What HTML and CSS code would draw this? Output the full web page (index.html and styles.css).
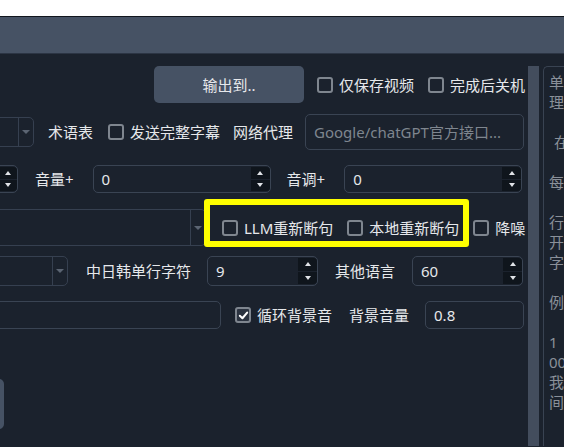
FILE: index.html
```html
<!DOCTYPE html>
<html lang="zh">
<head>
<meta charset="utf-8">
<title>视频翻译</title>
<link rel="stylesheet" href="styles.css">
</head>
<body>
<div class="topstrip"></div>
<div class="titlebar"></div>
<div class="main">
  <div class="form">
    <div class="row r1">
      <button class="btn out">输出到..</button>
      <label class="chk c-a"><span class="box"></span>仅保存视频</label>
      <label class="chk c-b"><span class="box"></span>完成后关机</label>
    </div>
    <div class="row r2">
      <div class="combo cb-term"><span class="val"></span><span class="arrow"></span></div>
      <span class="lbl l-term">术语表</span>
      <label class="chk c-send"><span class="box"></span>发送完整字幕</label>
      <span class="lbl l-proxy">网络代理</span>
      <div class="field f-proxy"><span class="ph">Google/chatGPT官方接口...</span></div>
    </div>
    <div class="row r3">
      <div class="field spin f-left"><span class="val"></span><span class="btns"><span class="up"></span><span class="dn"></span></span></div>
      <span class="lbl l-vol">音量+</span>
      <div class="field spin f-vol"><span class="val">0</span><span class="btns"><span class="up"></span><span class="dn"></span></span></div>
      <span class="lbl l-pitch">音调+</span>
      <div class="field spin f-pitch"><span class="val">0</span><span class="btns"><span class="up"></span><span class="dn"></span></span></div>
    </div>
    <div class="row r4">
      <div class="combo cb-big"><span class="val"></span><span class="arrow"></span></div>
      <div class="hl">
        <label class="chk"><span class="box"></span>LLM重新断句</label>
        <label class="chk c-local"><span class="box"></span>本地重新断句</label>
      </div>
      <label class="chk c-noise"><span class="box"></span>降噪</label>
    </div>
    <div class="row r5">
      <div class="combo cb-small"><span class="val"></span><span class="arrow"></span></div>
      <span class="lbl l-cjk">中日韩单行字符</span>
      <div class="field spin f-cjk"><span class="val">9</span><span class="btns"><span class="up"></span><span class="dn"></span></span></div>
      <span class="lbl l-other">其他语言</span>
      <div class="field spin f-other"><span class="val">60</span><span class="btns"><span class="up"></span><span class="dn"></span></span></div>
    </div>
    <div class="row r6">
      <div class="field f-bgm"></div>
      <label class="chk c-loop"><span class="box checked"><svg viewBox="0 0 12 12" width="11" height="11"><path d="M2 6.3 L4.8 9 L10 2.8" fill="none" stroke="#ffffff" stroke-width="2.2" stroke-linecap="round" stroke-linejoin="round"/></svg></span>循环背景音</label>
      <span class="lbl l-bgvol">背景音量</span>
      <div class="field f-bgvol"><span class="val">0.8</span></div>
    </div>
    <div class="row r7">
      <button class="btn stub"></button>
    </div>
  </div>
  <div class="vscroll"></div>
  <div class="notes">
    <div class="ln">单</div>
    <div class="ln">理</div>
    <div class="ln"></div>
    <div class="ln ind">在</div>
    <div class="ln"></div>
    <div class="ln">每</div>
    <div class="ln"></div>
    <div class="ln">行</div>
    <div class="ln">开</div>
    <div class="ln">字</div>
    <div class="ln"></div>
    <div class="ln">例</div>
    <div class="ln"></div>
    <div class="ln">1</div>
    <div class="ln">00</div>
    <div class="ln">我</div>
    <div class="ln">间</div>
  </div>
</div>
</body>
</html>
```

FILE: styles.css
```css
* { box-sizing: border-box; }
html, body { margin: 0; padding: 0; }
body {
  width: 564px;
  height: 447px;
  overflow: hidden;
  background: #1b222d;
  color: #e6e8eb;
  font-family: "Noto Sans", "Noto Sans CJK SC", sans-serif;
  font-size: 15px;
  line-height: 20px;
}
.topstrip { height: 17px; background: #ffffff; border-bottom: 1px solid #11161d; }
.titlebar { height: 37px; background: #465264; border-bottom: 1px solid #2c3544; }
.main { display: flex; padding-top: 12px; height: 392px; }
.form { flex: none; width: 528px; overflow: hidden; }
.vscroll { flex: none; width: 11px; background: #434d5d; }
.notes {
  flex: 1;
  min-width: 0;
  margin-left: 4px;
  border: 1px solid #394352;
  border-right: none;
  border-bottom: none;
  border-radius: 5px 0 0 0;
  padding: 5px 0 0 5px;
  color: #8a9099;
  white-space: nowrap;
  overflow: hidden;
}
.notes .ln { height: 20px; }
.notes .ind { padding-left: 5px; }

.row { display: flex; align-items: center; }
.r1 { height: 37px; }
.r2 { height: 36px; margin-top: 11px; }
.r3 { height: 28px; margin-top: 15px; }
.r4 { height: 37px; margin-top: 16px; }
.r5 { height: 30px; margin-top: 10px; }
.r6 { height: 28px; margin-top: 15px; }
.r7 { height: 50px; margin-top: 50px; }

.btn {
  font: inherit;
  color: #e6e8eb;
  background: #465264;
  border: none;
  border-radius: 5px;
  padding: 0;
}
.out { margin-left: 154px; width: 150px; height: 37px; }
.stub { margin-left: -46px; width: 50px; height: 50px; }

.chk { display: flex; align-items: center; white-space: nowrap; }
.box {
  flex: none;
  width: 16px;
  height: 16px;
  margin-right: 6px;
  border: 2px solid #7f868f;
  border-radius: 3px;
  background: #1b222d;
  display: flex;
  align-items: center;
  justify-content: center;
}
.box.checked { background: #2b3340; }
.c-a { margin-left: 13px; }
.c-b { margin-left: 14px; }
.c-send { margin-left: 15px; }
.c-local { margin-left: 14px; }
.c-noise { margin-left: 14px; }
.c-loop { margin-left: 14px; }

.lbl { white-space: nowrap; flex: none; }
.l-term { margin-left: 14px; }
.l-proxy { margin-left: 13px; }
.l-vol { margin-left: 17px; }
.l-pitch { margin-left: 16px; }
.l-cjk { margin-left: 18px; }
.l-other { margin-left: 17px; }
.l-bgvol { margin-left: 17px; }

.field {
  flex: none;
  display: flex;
  align-items: stretch;
  border: 1px solid #3a4453;
  border-radius: 5px;
  background: #1b222d;
}
.field .val, .field .ph { flex: 1; display: flex; align-items: center; padding-left: 8px; }
.ph { color: #7f868f; white-space: nowrap; }
.f-proxy { margin-left: 12px; width: 219px; height: 36px; }
.f-left { margin-left: -42px; width: 60px; height: 28px; }
.f-vol { margin-left: 19px; width: 178px; height: 28px; }
.f-pitch { margin-left: 19px; width: 178px; height: 28px; }
.f-cjk { margin-left: 16px; width: 111px; height: 30px; }
.f-other { margin-left: 17px; width: 111px; height: 30px; }
.f-bgm { margin-left: -39px; width: 260px; height: 28px; }
.f-bgvol { margin-left: 16px; width: 99px; height: 28px; }

.btns { flex: none; width: 19px; display: flex; flex-direction: column; gap: 1px; padding: 1px 0; }
.btns .up, .btns .dn {
  flex: 1;
  background: #0f151c;
  display: flex;
  align-items: center;
  justify-content: center;
}
.btns .up { border-radius: 0 4px 0 0; }
.btns .dn { border-radius: 0 0 4px 0; }
.btns .up::after {
  content: "";
  border-left: 3.5px solid transparent;
  border-right: 3.5px solid transparent;
  border-bottom: 4px solid #e0e3e7;
}
.btns .dn::after {
  content: "";
  border-left: 3.5px solid transparent;
  border-right: 3.5px solid transparent;
  border-top: 4px solid #e0e3e7;
}

.combo {
  flex: none;
  display: flex;
  align-items: stretch;
  border: 1px solid #364050;
  border-radius: 5px;
  background: #1b222d;
}
.combo .val { flex: 1; }
.combo .arrow {
  flex: none;
  width: 15px;
  border-left: 1px solid #364050;
  display: flex;
  align-items: center;
  justify-content: center;
}
.combo .arrow::after {
  content: "";
  border-left: 4px solid transparent;
  border-right: 4px solid transparent;
  border-top: 4px solid #5b6472;
}
.cb-term { margin-left: -46px; width: 80px; height: 30px; }
.cb-big { margin-left: -46px; width: 252px; height: 37px; }
.cb-small { margin-left: -32px; width: 100px; height: 30px; }

.hl {
  position: relative;
  align-self: stretch;
  display: flex;
  align-items: center;
  padding-left: 16px;
}
.hl::after {
  content: "";
  position: absolute;
  left: -2px;
  top: -10px;
  right: -10px;
  bottom: -1px;
  border: 6px solid #ffff00;
  border-radius: 3px;
  pointer-events: none;
}
```
